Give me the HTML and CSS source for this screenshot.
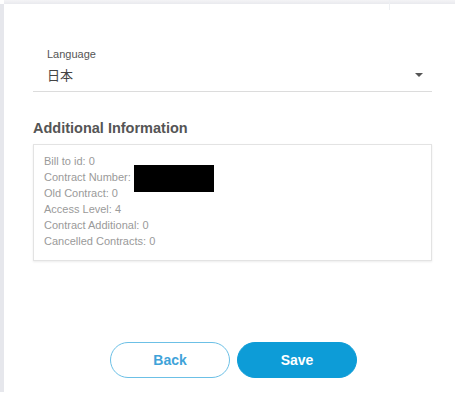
FILE: index.html
```html
<!doctype html>
<html lang="en">
<head>
<meta charset="UTF-8">
<title>Settings</title>
<link rel="stylesheet" href="styles.css">
</head>
<body>
	<div class="page">
		<div class="topbar"><span class="tick"></span></div>
		<div class="panel">
			<div class="field">
				<label class="field-label">Language</label>
				<div class="select">
					<span class="select-value">日本</span>
					<span class="caret"></span>
				</div>
			</div>
			<h2 class="section-title">Additional Information</h2>
			<div class="info">
				<div class="info-row">Bill to id: 0</div>
				<div class="info-row">Contract Number: <span class="redact"></span></div>
				<div class="info-row">Old Contract: 0</div>
				<div class="info-row">Access Level: 4</div>
				<div class="info-row">Contract Additional: 0</div>
				<div class="info-row">Cancelled Contracts: 0</div>
			</div>
			<div class="actions">
				<button class="btn btn-back">Back</button>
				<button class="btn btn-save">Save</button>
			</div>
		</div>
	</div>
</body>
</html>
```
FILE: styles.css
```css
body{
	margin:0;
	background:#fff;
	font-family:"Liberation Sans", Arial, "Noto Sans CJK JP", sans-serif;
}
.page{
	width:458px;
	height:411px;
}
.topbar{
	height:4px;
	margin-left:4px;
	width:451px;
	background:linear-gradient(#f4f4f6,#e9eaee);
	position:relative;
}
.tick{
	position:absolute;
	left:385px;
	top:0;
	width:1px;
	height:10px;
	background:#eef0f3;
}
.panel{
	height:388px;
	border-left:4px solid #e6e7ec;
	padding:43px 0 0 29px;
	box-sizing:border-box;
}
.field{
	width:399px;
}
.field-label{
	display:block;
	margin-left:14px;
	font-size:11px;
	color:#555;
	line-height:14px;
}
.select{
	display:flex;
	align-items:center;
	justify-content:space-between;
	height:30px;
	padding:0 9px 0 14px;
	border-bottom:1px solid #dcdcdc;
}
.select-value{
	font-size:13px;
	color:#444;
	font-family:"Noto Sans CJK JP", sans-serif;
	margin-top:-4px;
}
.caret{
	width:0;
	height:0;
	border-left:4px solid transparent;
	border-right:4px solid transparent;
	border-top:4px solid #555;
	margin-top:-2px;
}
.section-title{
	margin:27px 0 0 0;
	font-size:14.5px;
	font-weight:bold;
	color:#555;
	line-height:19px;
}
.info{
	width:399px;
	height:117px;
	margin-top:6px;
	padding:8px 10px 0 10px;
	box-sizing:border-box;
	border:1px solid #e3e3e3;
	box-shadow:0 1px 2px rgba(0,0,0,0.08);
}
.info-row{
	font-size:11px;
	color:#9a9a9a;
	line-height:16px;
	height:16px;
}
.redact{
	display:inline-block;
	vertical-align:top;
	width:80px;
	height:27px;
	background:#000;
	position:relative;
	top:-4px;
}
.actions{
	display:flex;
	gap:7px;
	margin:81px 0 0 77px;
}
.btn{
	width:120px;
	height:36px;
	border-radius:18px;
	font-family:"Liberation Sans", Arial, sans-serif;
	font-size:14px;
	font-weight:bold;
	cursor:pointer;
}
.btn-back{
	background:#fff;
	border:1px solid #6cc0e6;
	color:#3fa3d9;
}
.btn-save{
	background:#0d9cd7;
	border:1px solid #0d9cd7;
	color:#fff;
}
```
